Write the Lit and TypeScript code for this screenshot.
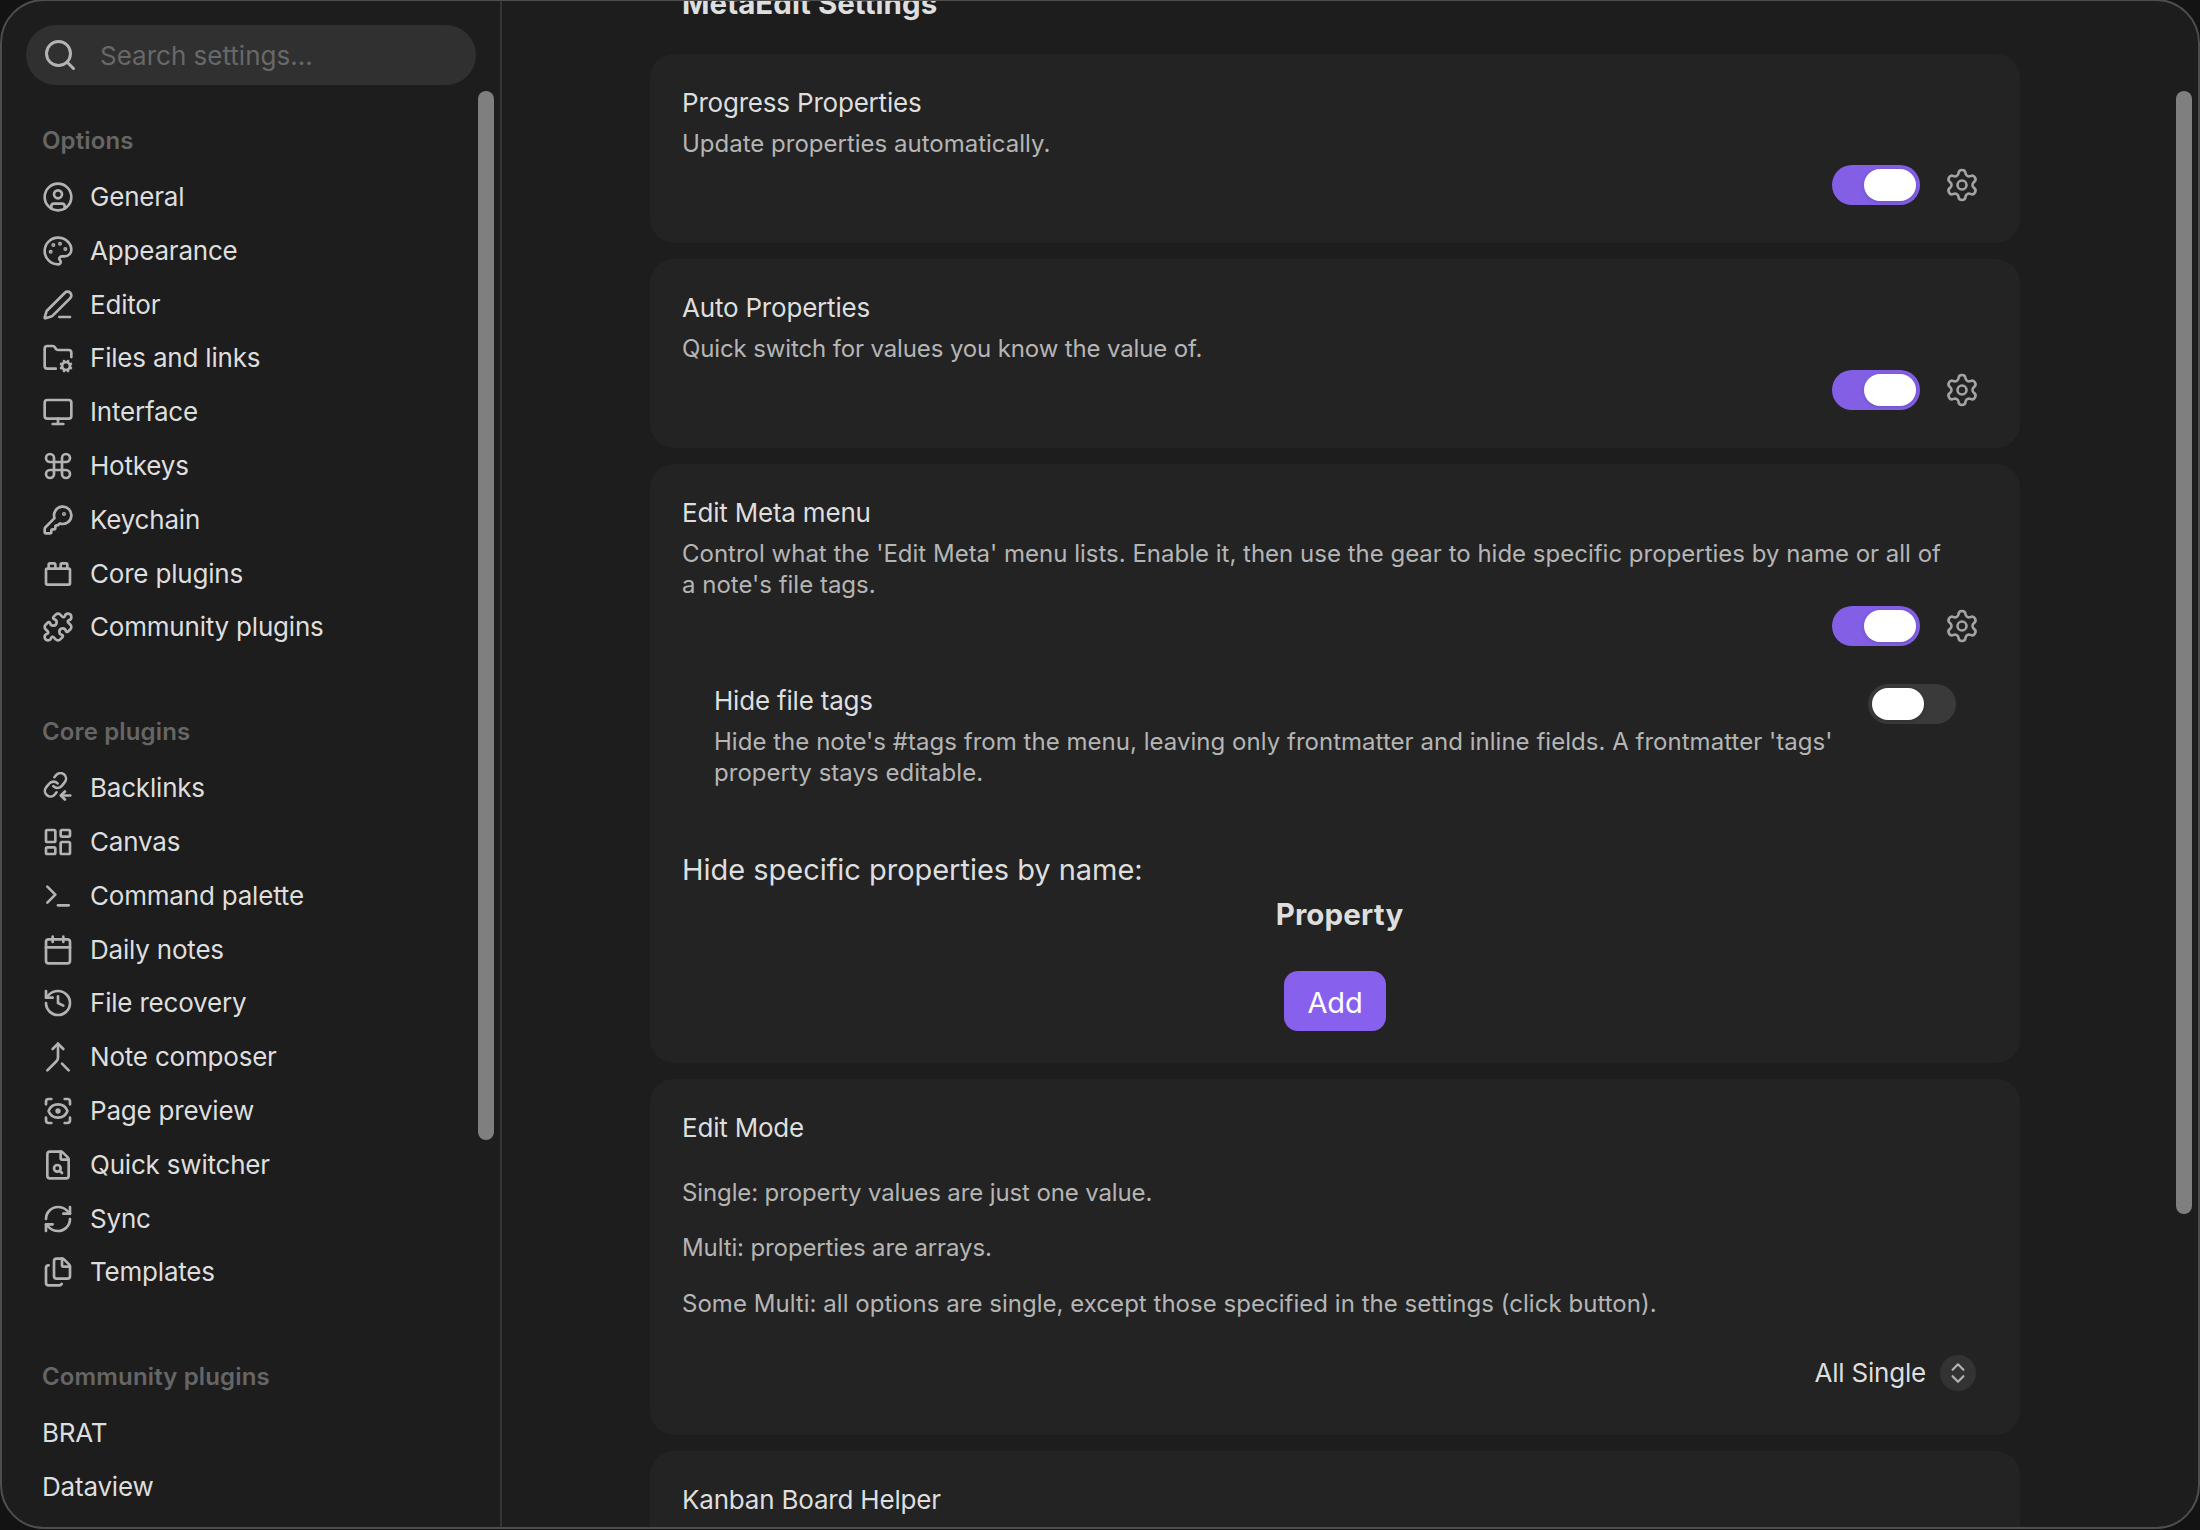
import { LitElement, html, css, svg, nothing, SVGTemplateResult, TemplateResult } from "lit";

const p = (...ds: string[]) => svg`${ds.map((d) => svg`<path d=${d}></path>`)}`;
const dot = (cx: number, cy: number) => svg`<circle cx=${cx} cy=${cy} r="0.5" fill="currentColor"></circle>`;
const ring = (cx: number, cy: number, r: number) => svg`<circle cx=${cx} cy=${cy} r=${r}></circle>`;
const box = (x: number, y: number, w: number, h: number, rx: number) =>
  svg`<rect x=${x} y=${y} width=${w} height=${h} rx=${rx}></rect>`;

const ICONS: Record<string, SVGTemplateResult> = {
  search: svg`${ring(11, 11, 8)}${p("m21 21-4.34-4.34")}`,
  user: svg`${ring(12, 12, 10)}${ring(12, 10, 3)}${p("M7 20.662V19a2 2 0 0 1 2-2h6a2 2 0 0 1 2 2v1.662")}`,
  palette: svg`${p("M12 22a1 1 0 0 1 0-20 10 9 0 0 1 10 9 5 5 0 0 1-5 5h-2.25a1.75 1.75 0 0 0-1.4 2.8l.3.4a1.75 1.75 0 0 1-1.4 2.8z")}${dot(13.5, 6.5)}${dot(17.5, 10.5)}${dot(6.5, 12.5)}${dot(8.5, 7.5)}`,
  pen: p("M13 21h8", "M21.174 6.812a1 1 0 0 0-3.986-3.987L3.842 16.174a2 2 0 0 0-.5.83l-1.321 4.352a.5.5 0 0 0 .623.622l4.353-1.32a2 2 0 0 0 .83-.497z"),
  folder: svg`${p("M10.3 20H4a2 2 0 0 1-2-2V5a2 2 0 0 1 2-2h3.98a2 2 0 0 1 1.69.9l.66 1.2A2 2 0 0 0 12 6h8a2 2 0 0 1 2 2v3.3", "m14.305 19.53.923-.382", "m15.228 16.852-.923-.383", "m16.852 15.228-.383-.923", "m16.852 20.772-.383.924", "m19.148 15.228.383-.923", "m19.53 21.696-.382-.924", "m20.772 16.852.924-.383", "m20.772 19.148.924.383")}${ring(18, 18, 3)}`,
  monitor: svg`${box(2, 3, 20, 14, 2)}${p("M8 21h8", "M12 17v4")}`,
  command: p("M15 6v12a3 3 0 1 0 3-3H6a3 3 0 1 0 3 3V6a3 3 0 1 0-3 3h12a3 3 0 1 0-3-3"),
  key: svg`${p("M2.586 17.414A2 2 0 0 0 2 18.828V21a1 1 0 0 0 1 1h3a1 1 0 0 0 1-1v-1a1 1 0 0 1 1-1h1a1 1 0 0 0 1-1v-1a1 1 0 0 1 1-1h.172a2 2 0 0 0 1.414-.586l.814-.814a6.5 6.5 0 1 0-4-4z")}${dot(16.5, 7.5)}`,
  brick: svg`${box(3, 8, 18, 12, 1)}${p("M10 8V5c0-.6-.4-1-1-1H6a1 1 0 0 0-1 1v3", "M19 8V5c0-.6-.4-1-1-1h-3a1 1 0 0 0-1 1v3")}`,
  puzzle: p("M15.39 4.39a1 1 0 0 0 1.68-.474 2.5 2.5 0 1 1 3.014 3.015 1 1 0 0 0-.474 1.68l1.683 1.682a2.414 2.414 0 0 1 0 3.414L19.61 15.39a1 1 0 0 1-1.68-.474 2.5 2.5 0 1 0-3.014 3.015 1 1 0 0 1 .474 1.68l-1.683 1.682a2.414 2.414 0 0 1-3.414 0L8.61 19.61a1 1 0 0 0-1.68.474 2.5 2.5 0 1 1-3.014-3.015 1 1 0 0 0 .474-1.68l-1.683-1.682a2.414 2.414 0 0 1 0-3.414L4.39 8.61a1 1 0 0 1 1.68.474 2.5 2.5 0 1 0 3.014-3.015 1 1 0 0 1-.474-1.68l1.683-1.682a2.414 2.414 0 0 1 3.414 0z"),
  backlink: svg`<g transform="translate(10.1 9.6) rotate(-6) scale(0.84) translate(-12 -12)" stroke-width="2.3">${p("M10 13a5 5 0 0 0 7.54.54l3-3a5 5 0 0 0-7.07-7.07l-1.72 1.71", "M14 11a5 5 0 0 0-7.54-.54l-3 3a5 5 0 0 0 7.07 7.07l1.71-1.71")}</g>${p("M21.2 17.6H14.2", "m17.2 14.6-3 3 3 3")}`,
  dashboard: svg`${box(3, 3, 7, 9, 1)}${box(14, 3, 7, 5, 1)}${box(14, 12, 7, 9, 1)}${box(3, 16, 7, 5, 1)}`,
  terminal: p("M12 19h8", "m4 17 6-6-6-6"),
  calendar: svg`${box(3, 4, 18, 18, 2)}${p("M8 2v4", "M16 2v4", "M3 10h18")}`,
  history: p("M3 12a9 9 0 1 0 9-9 9.75 9.75 0 0 0-6.74 2.74L3 8", "M3 3v5h5", "M12 7v5l4 2"),
  merge: p("m8 6 4-4 4 4", "M12 2v10.3a4 4 0 0 1-1.172 2.872L4 22", "m20 22-5-5"),
  scan: svg`${p("M3 7V5a2 2 0 0 1 2-2h2", "M17 3h2a2 2 0 0 1 2 2v2", "M21 17v2a2 2 0 0 1-2 2h-2", "M7 21H5a2 2 0 0 1-2-2v-2", "M18.944 12.33a1 1 0 0 0 0-.66 7.5 7.5 0 0 0-13.888 0 1 1 0 0 0 0 .66 7.5 7.5 0 0 0 13.888 0")}${ring(12, 12, 1)}`,
  filesearch: svg`${p("M6 22a2 2 0 0 1-2-2V4a2 2 0 0 1 2-2h8a2.4 2.4 0 0 1 1.704.706l3.588 3.588A2.4 2.4 0 0 1 20 8v12a2 2 0 0 1-2 2z", "M14 2v5a1 1 0 0 0 1 1h5", "M13.3 16.3 15 18")}${ring(11.5, 14.5, 2.5)}`,
  refresh: p("M3 12a9 9 0 0 1 9-9 9.75 9.75 0 0 1 6.74 2.74L21 8", "M21 3v5h-5", "M21 12a9 9 0 0 1-9 9 9.75 9.75 0 0 1-6.74-2.74L3 16", "M8 16H3v5"),
  files: p("M15 2h-4a2 2 0 0 0-2 2v11a2 2 0 0 0 2 2h8a2 2 0 0 0 2-2V8", "M16.706 2.706A2.4 2.4 0 0 0 15 2v5a1 1 0 0 0 1 1h5a2.4 2.4 0 0 0-.706-1.706z", "M5 7a2 2 0 0 0-2 2v11a2 2 0 0 0 2 2h8a2 2 0 0 0 1.732-1"),
  gear: svg`${p("M9.671 4.136a2.34 2.34 0 0 1 4.659 0 2.34 2.34 0 0 0 3.319 1.915 2.34 2.34 0 0 1 2.33 4.033 2.34 2.34 0 0 0 0 3.831 2.34 2.34 0 0 1-2.33 4.033 2.34 2.34 0 0 0-3.319 1.915 2.34 2.34 0 0 1-4.659 0 2.34 2.34 0 0 0-3.32-1.915 2.34 2.34 0 0 1-2.33-4.033 2.34 2.34 0 0 0 0-3.831A2.34 2.34 0 0 1 6.35 6.051a2.34 2.34 0 0 0 3.319-1.915")}${ring(12, 12, 3)}`,
  updown: p("m7 15 5 5 5-5", "m7 9 5-5 5 5"),
};

const icon = (name: string, cls: string) =>
  html`<svg class="icon ${cls}" viewBox="0 0 24 24">${ICONS[name]}</svg>`;

interface NavItem { label: string; icon?: string }
interface NavGroup { title: string; items: NavItem[] }

const NAV: NavGroup[] = [
  {
    title: "Options",
    items: [
      { label: "General", icon: "user" },
      { label: "Appearance", icon: "palette" },
      { label: "Editor", icon: "pen" },
      { label: "Files and links", icon: "folder" },
      { label: "Interface", icon: "monitor" },
      { label: "Hotkeys", icon: "command" },
      { label: "Keychain", icon: "key" },
      { label: "Core plugins", icon: "brick" },
      { label: "Community plugins", icon: "puzzle" },
    ],
  },
  {
    title: "Core plugins",
    items: [
      { label: "Backlinks", icon: "backlink" },
      { label: "Canvas", icon: "dashboard" },
      { label: "Command palette", icon: "terminal" },
      { label: "Daily notes", icon: "calendar" },
      { label: "File recovery", icon: "history" },
      { label: "Note composer", icon: "merge" },
      { label: "Page preview", icon: "scan" },
      { label: "Quick switcher", icon: "filesearch" },
      { label: "Sync", icon: "refresh" },
      { label: "Templates", icon: "files" },
    ],
  },
  { title: "Community plugins", items: [{ label: "BRAT" }, { label: "Dataview" }] },
];

class AppRoot extends LitElement {
  static styles = css`
    :host {
      display: flex;
      height: 1530px;
      overflow: hidden;
      background: #131313;
      color: #dedede;
      font-family: "Inter", "Liberation Sans", sans-serif;
      font-size: 26px;
      font-weight: 400;
      line-height: 33.8px;
      letter-spacing: -0.2px;
    }
    * { box-sizing: border-box; }
    .window {
      flex: 1;
      display: flex;
      height: 1530px;
      margin-top: -1px;
      border: 2px solid #4e4e4e;
      border-radius: 44px;
      background: #1d1d1d;
      overflow: hidden;
    }
    .icon {
      flex: none;
      fill: none;
      stroke: currentColor;
      stroke-width: 2;
      stroke-linecap: round;
      stroke-linejoin: round;
      color: #b3b3b3;
    }
    .small { width: 32px; height: 32px; }
    .medium { width: 36px; height: 36px; }

    .sidebar {
      position: relative;
      flex: none;
      width: 500px;
      border-right: 2px solid #343434;
      padding: 24px;
      white-space: nowrap;
    }
    .search {
      display: flex;
      align-items: center;
      gap: 22px;
      width: 450px;
      height: 60px;
      padding-left: 16px;
      border-radius: 30px;
      background: #303030;
      color: #686868;
      letter-spacing: 0;
    }
    .search span { padding-top: 2px; }
    .groups {
      display: flex;
      flex-direction: column;
      gap: 61.6px;
      padding: 39.7px 0 0 16px;
    }
    .group-title {
      margin-bottom: 14.2px;
      color: #666;
      font-size: 24px;
      line-height: 31.2px;
      font-weight: 600;
      letter-spacing: 0.14px;
    }
    .item {
      display: flex;
      align-items: center;
      gap: 16px;
      height: 53.8px;
    }
    .scrollbar {
      position: absolute;
      top: 90px;
      right: 6px;
      width: 16px;
      height: 1049px;
      border-radius: 8px;
      background: #7f7f7f;
    }
    .main {
      position: relative;
      flex: 1;
      overflow: hidden;
      padding: 0 178px 0 148px;
    }
    .main .scrollbar { height: 1123px; }
    .page-title {
      margin: -16px 0 33px;
      padding-left: 32px;
      font-size: 29.5px;
      line-height: 36px;
      font-weight: 700;
      letter-spacing: 0.05px;
    }
    .cards {
      display: flex;
      flex-direction: column;
      gap: 16px;
    }
    .card {
      padding: 32px;
      border-radius: 24px;
      background: #232323;
    }
    .desc {
      margin-top: 8px;
      color: #b5b5b5;
      font-size: 24px;
      line-height: 31.2px;
      letter-spacing: 0;
      white-space: nowrap;
    }
    .desc.tight { letter-spacing: -0.13px; }
    .desc.wide { letter-spacing: 0.03px; }
    .desc p { margin: 24px 0; letter-spacing: -0.12px; }
    .desc p:last-child { letter-spacing: 0.03px; }
    .controls {
      display: flex;
      justify-content: flex-end;
      align-items: center;
      gap: 16px;
      height: 52px;
    }
    .gear {
      display: grid;
      place-items: center;
      width: 52px;
      height: 52px;
    }
    .gear .icon { stroke-width: 1.75; color: #a3a3a3; }
    .toggle {
      flex: none;
      display: flex;
      width: 88px;
      height: 40px;
      padding: 4px;
      border-radius: 20px;
      background: #3a3a3a;
    }
    .toggle.on { justify-content: flex-end; background: #835fe6; }
    .thumb {
      width: 52px;
      height: 32px;
      border-radius: 16px;
      background: #fff;
      box-shadow: 0 1px 4px rgba(0, 0, 0, 0.16);
    }
    .nested {
      display: flex;
      justify-content: space-between;
      align-items: flex-start;
      padding: 31.5px 32px 32px;
    }
    .list {
      margin-top: 27px;
      font-size: 29px;
      line-height: 45px;
      letter-spacing: -0.03px;
    }
    .list-head {
      padding-left: 9px;
      text-align: center;
      font-size: 29.5px;
      font-weight: 700;
      letter-spacing: 0.15px;
    }
    .add-row {
      display: flex;
      justify-content: center;
      padding-top: 34.5px;
    }
    .add {
      display: grid;
      place-items: center;
      width: 102px;
      height: 60px;
      padding-top: 2px;
      border-radius: 14px;
      background: #8761ee;
      color: #fff;
      letter-spacing: -0.2px;
    }
    .mode .controls { gap: 14px; height: 60px; padding-right: 12px; }
    .mode .desc p:first-child { margin-top: 32px; }
    .mode .desc { margin-top: 0; }
    .updown {
      display: grid;
      place-items: center;
      width: 36px;
      height: 36px;
      border-radius: 50%;
      background: #333;
    }
    .updown .icon { width: 26px; height: 26px; }
  `;

  private toggle(on: boolean) {
    return html`<div class="toggle ${on ? "on" : ""}"><div class="thumb"></div></div>`;
  }

  private card(title: string, cls: string, desc: TemplateResult, extra: TemplateResult | typeof nothing = nothing) {
    return html`
      <section class="card">
        <div>${title}</div>
        <div class="desc ${cls}">${desc}</div>
        <div class="controls">${this.toggle(true)}<div class="gear">${icon("gear", "medium")}</div></div>
        ${extra}
      </section>`;
  }

  render() {
    return html`
      <div class="window">
        <nav class="sidebar">
          <div class="search">${icon("search", "medium")}<span>Search settings...</span></div>
          <div class="groups">
            ${NAV.map((g) => html`
              <div>
                <div class="group-title">${g.title}</div>
                ${g.items.map((i) => html`<div class="item">${i.icon ? icon(i.icon, "small") : nothing}<span>${i.label}</span></div>`)}
              </div>`)}
          </div>
          <div class="scrollbar"></div>
        </nav>
        <main class="main">
          <div class="page-title">MetaEdit Settings</div>
          <div class="cards">
            ${this.card("Progress Properties", "", html`Update properties automatically.`)}
            ${this.card("Auto Properties", "tight", html`Quick switch for values you know the value of.`)}
            ${this.card(
              "Edit Meta menu",
              "",
              html`Control what the 'Edit Meta' menu lists. Enable it, then use the gear to hide specific properties by name or all of<br />a note's file tags.`,
              html`
                <div class="nested">
                  <div>
                    <div>Hide file tags</div>
                    <div class="desc wide">Hide the note's #tags from the menu, leaving only frontmatter and inline fields. A frontmatter 'tags'<br />property stays editable.</div>
                  </div>
                  ${this.toggle(false)}
                </div>
                <div class="list">
                  <div>Hide specific properties by name:</div>
                  <div class="list-head">Property</div>
                  <div class="add-row"><div class="add">Add</div></div>
                </div>`
            )}
            <section class="card mode">
              <div>Edit Mode</div>
              <div class="desc">
                <p>Single: property values are just one value.</p>
                <p>Multi: properties are arrays.</p>
                <p>Some Multi: all options are single, except those specified in the settings (click button).</p>
              </div>
              <div class="controls"><span>All Single</span><div class="updown">${icon("updown", "")}</div></div>
            </section>
            <section class="card"><div>Kanban Board Helper</div></section>
          </div>
          <div class="scrollbar"></div>
        </main>
      </div>`;
  }
}
customElements.define("app-root", AppRoot);
